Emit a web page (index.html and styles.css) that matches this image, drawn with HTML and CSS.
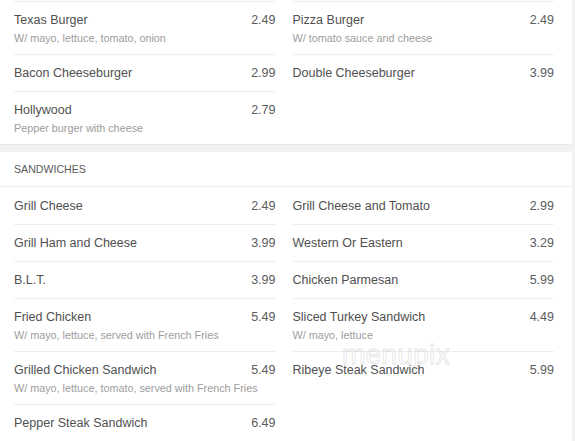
FILE: index.html
```html
<!DOCTYPE html>
<html lang="en">
<head>
<meta charset="utf-8">
<title>Menu</title>
<link rel="stylesheet" href="styles.css">
</head>
<body>
<section class="card">
  <div class="grid cont">
    <div class="item">
      <div class="line"><span class="name">Texas Burger</span><span class="price">2.49</span></div>
      <div class="desc">W/ mayo, lettuce, tomato, onion</div>
    </div>
    <div class="item">
      <div class="line"><span class="name">Pizza Burger</span><span class="price">2.49</span></div>
      <div class="desc">W/ tomato sauce and cheese</div>
    </div>
    <div class="item">
      <div class="line"><span class="name">Bacon Cheeseburger</span><span class="price">2.99</span></div>
    </div>
    <div class="item">
      <div class="line"><span class="name">Double Cheeseburger</span><span class="price">3.99</span></div>
    </div>
    <div class="item">
      <div class="line"><span class="name">Hollywood</span><span class="price">2.79</span></div>
      <div class="desc">Pepper burger with cheese</div>
    </div>
  </div>
</section>
<section class="card">
  <h2 class="cat">SANDWICHES</h2>
  <div class="grid">
    <div class="item">
      <div class="line"><span class="name">Grill Cheese</span><span class="price">2.49</span></div>
    </div>
    <div class="item">
      <div class="line"><span class="name">Grill Cheese and Tomato</span><span class="price">2.99</span></div>
    </div>
    <div class="item">
      <div class="line"><span class="name">Grill Ham and Cheese</span><span class="price">3.99</span></div>
    </div>
    <div class="item">
      <div class="line"><span class="name">Western Or Eastern</span><span class="price">3.29</span></div>
    </div>
    <div class="item">
      <div class="line"><span class="name">B.L.T.</span><span class="price">3.99</span></div>
    </div>
    <div class="item">
      <div class="line"><span class="name">Chicken Parmesan</span><span class="price">5.99</span></div>
    </div>
    <div class="item">
      <div class="line"><span class="name">Fried Chicken</span><span class="price">5.49</span></div>
      <div class="desc">W/ mayo, lettuce, served with French Fries</div>
    </div>
    <div class="item">
      <div class="line"><span class="name">Sliced Turkey Sandwich</span><span class="price">4.49</span></div>
      <div class="desc">W/ mayo, lettuce</div>
    </div>
    <div class="item">
      <div class="line"><span class="name">Grilled Chicken Sandwich</span><span class="price">5.49</span></div>
      <div class="desc">W/ mayo, lettuce, tomato, served with French Fries</div>
    </div>
    <div class="item">
      <div class="line"><span class="name">Ribeye Steak Sandwich</span><span class="price">5.99</span></div>
    </div>
    <div class="item">
      <div class="line"><span class="name">Pepper Steak Sandwich</span><span class="price">6.49</span></div>
    </div>
  </div>
  <div class="watermark">menupix</div>
</section>
</body>
</html>
```

FILE: styles.css
```css
html, body {
  margin: 0;
  padding: 0;
}
body {
  background: #f2f2f3;
  font-family: "Liberation Sans", Arial, sans-serif;
  color: #505050;
}
.card {
  position: relative;
  width: 572px;
  background: #ffffff;
  margin-bottom: 8px;
}
.card:first-child {
  padding-top: 1px;
  border-bottom: 1px solid #e9e9e9;
  margin-bottom: 7px;
}
.cat {
  margin: 0;
  padding: 10px 14px;
  line-height: 14px;
  font-size: 10.6px;
  font-weight: normal;
  color: #5a5a5a;
  border-bottom: 1px solid #eeeeee;
}
.grid {
  display: grid;
  grid-template-columns: 1fr 1fr;
  column-gap: 17px;
  padding: 0 18px 0 14px;
  align-items: start;
}
.item {
  padding: 9px 0 8px;
  border-top: 1px solid #eeeeee;
}
.grid .item:nth-child(-n+2) {
  border-top-color: transparent;
}
.grid.cont .item:nth-child(-n+2) {
  border-top-color: #eeeeee;
}
.line {
  display: flex;
  justify-content: space-between;
  font-size: 12.5px;
  line-height: 19px;
}
.name {
  color: #505050;
}
.price {
  color: #5c5c5c;
}
.desc {
  font-size: 10.8px;
  line-height: 16px;
  color: #9d9d9d;
}
.watermark {
  position: absolute;
  left: 342px;
  top: 189px;
  font-size: 28px;
  line-height: 28px;
  letter-spacing: 0.3px;
  color: rgba(255, 255, 255, 0);
  -webkit-text-stroke: 0.8px rgba(190, 190, 190, 0.45);
  pointer-events: none;
}
```
